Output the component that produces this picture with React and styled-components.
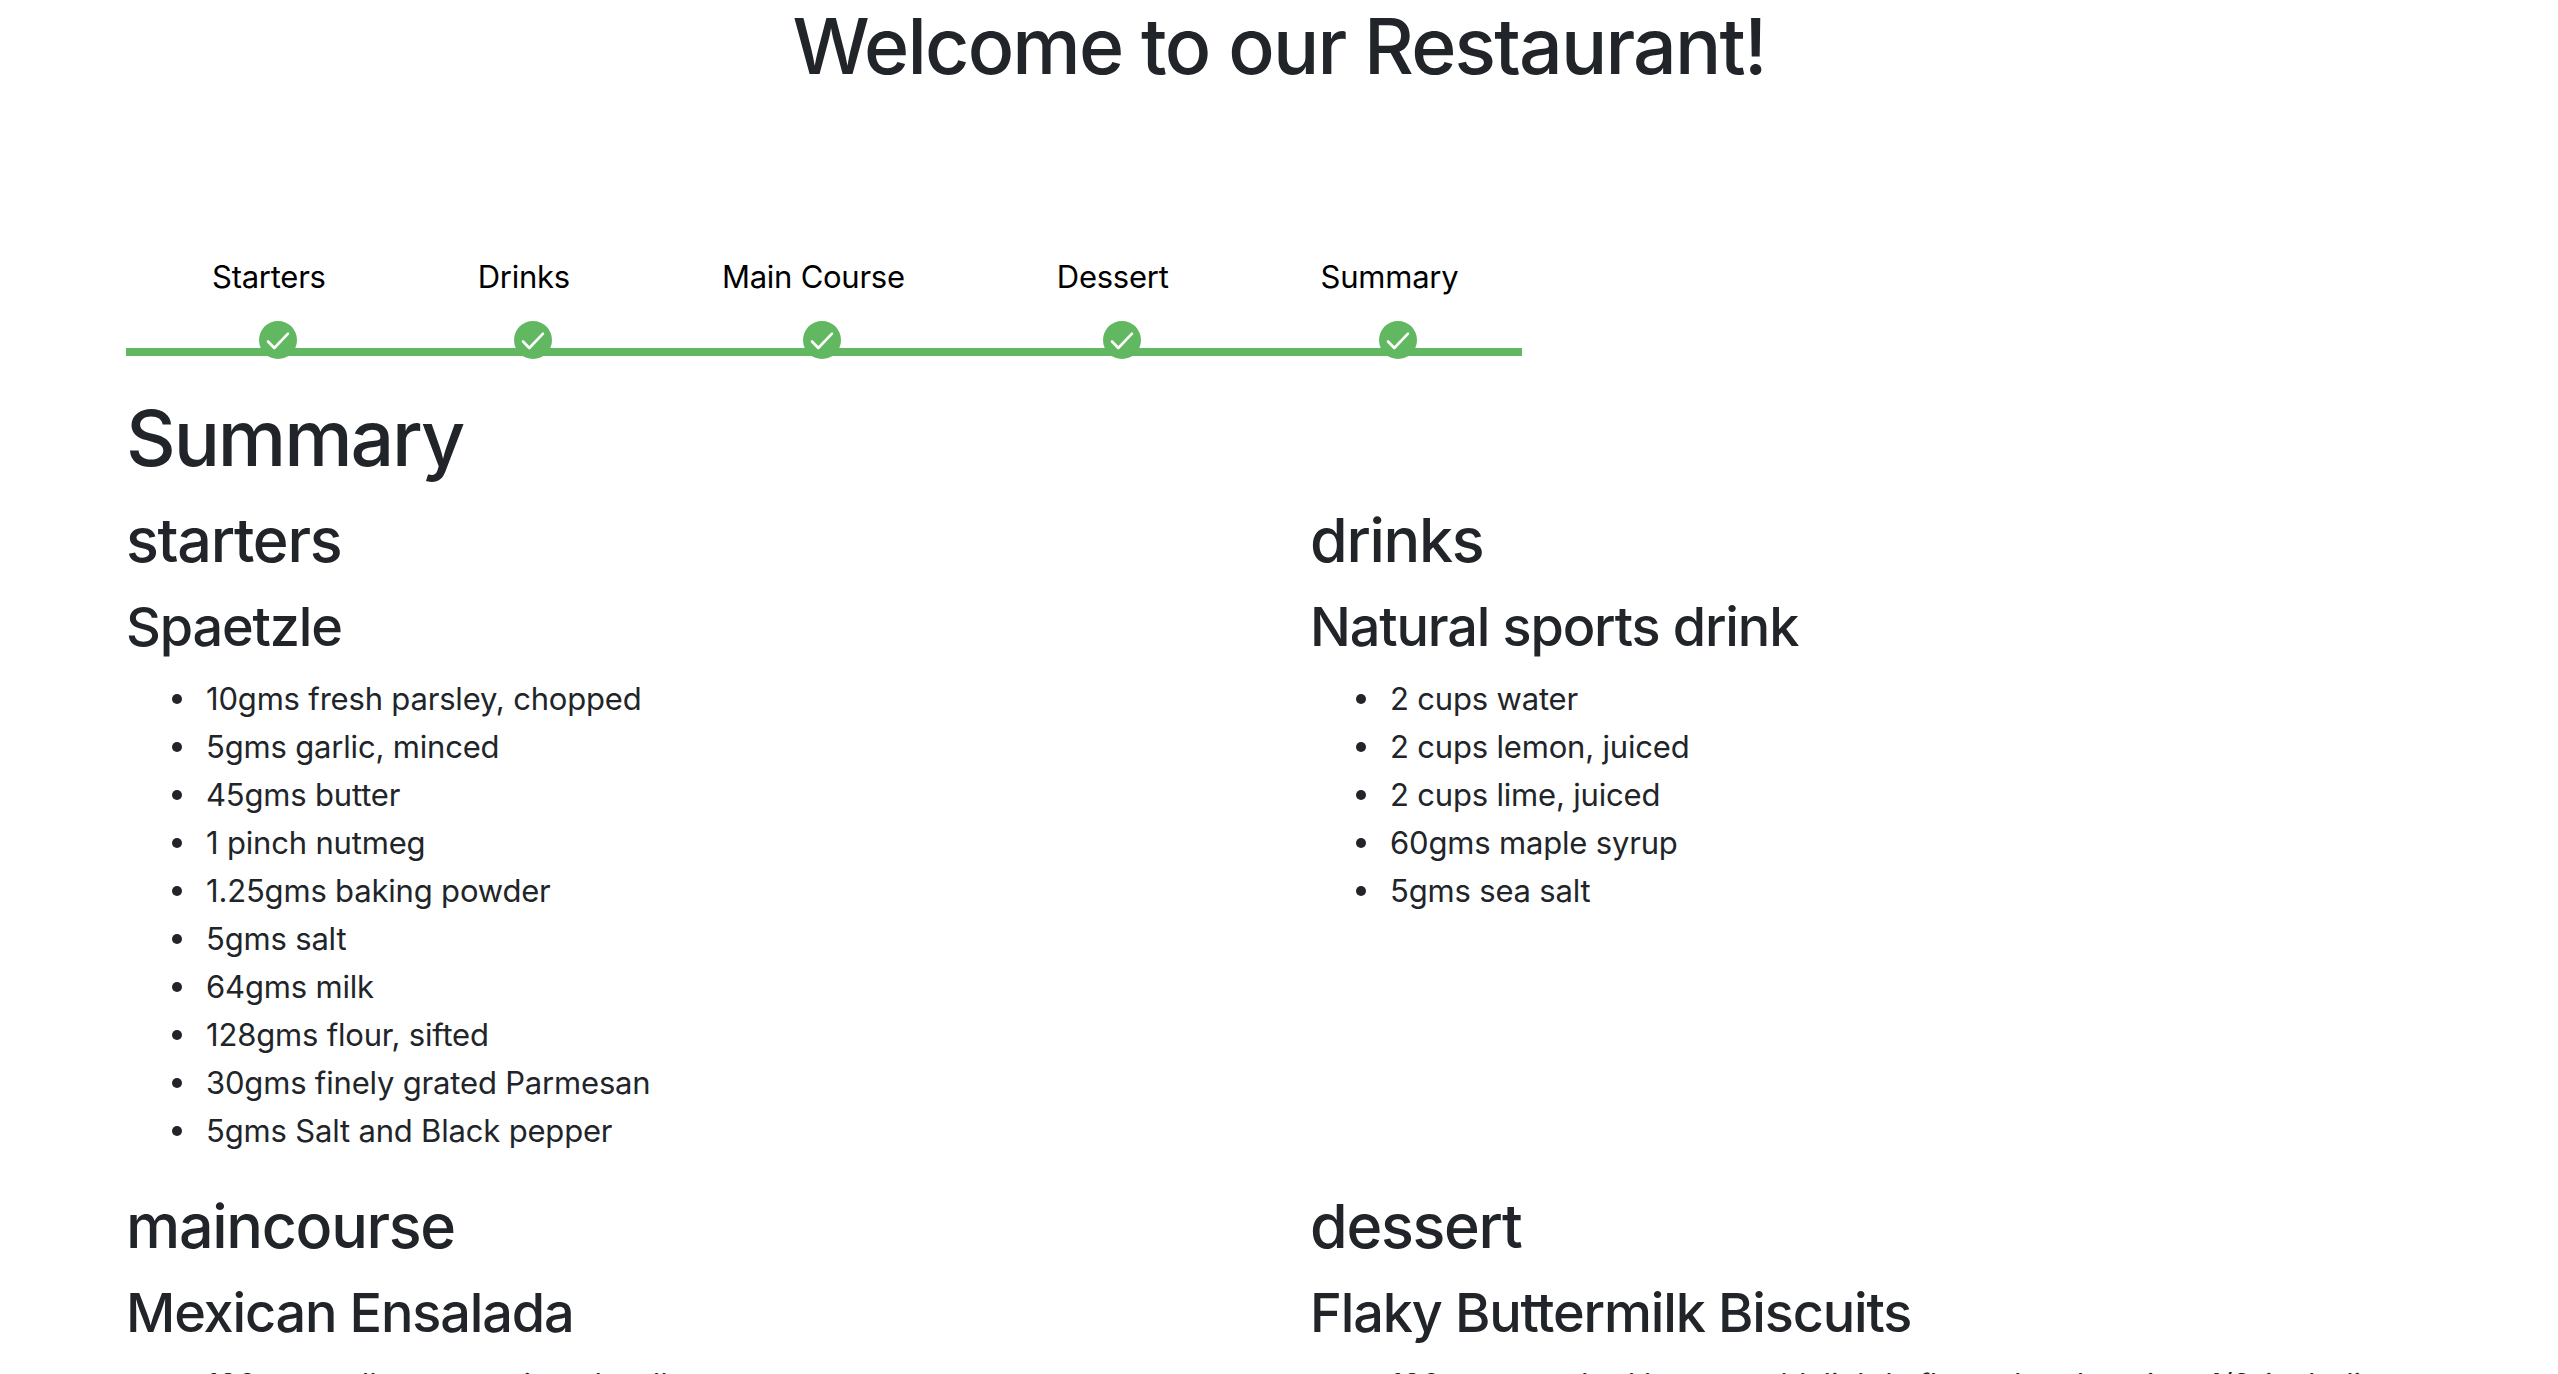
import React from "react";
import styled, { createGlobalStyle } from "styled-components";

const Global = createGlobalStyle`
  html, body { margin: 0; padding: 0; background: #fff; height: 100%; overflow: hidden; }
  body { font-family: Inter, "Liberation Sans", sans-serif; color: #212529; font-size: 32px; line-height: 48px; }
`;
const Page = styled.div`height: 1374px; overflow: hidden; padding: 0 126px; box-sizing: border-box;`;
const Title = styled.h1`margin: 0 0 157px; font-size: 77px; line-height: 93px; height: 96px; font-weight: 500; text-align: center; letter-spacing: -1.8px;`;
const Stepper = styled.div`width: 1396px; position: relative; height: 103px;`;
const Steps = styled.ol`list-style: none; margin: 0; padding: 0 0 0 86px; display: flex; gap: 152px;`;
const Step = styled.li`display: flex; flex-direction: column; align-items: center; color: #000; font-size: 31px; line-height: 48px; height: 103px; letter-spacing: -0.25px;`;
const Dot = styled.span`width: 38px; height: 38px; margin: 20px 0 0 18px; border-radius: 50%; background: #61b861; display: block; position: relative; z-index: 1;`;
const Line = styled.div`position: absolute; left: 0; right: 0; bottom: 0; height: 8px; background: #61b861;`;
const Heading = styled.h2`margin: 34px 0 16px; font-size: 77px; line-height: 96px; font-weight: 500; letter-spacing: -2.1px;`;
const Grid = styled.div`display: grid; grid-template-columns: 1184px 1184px;`;
const Col = styled.section`padding-bottom: 33px;`;
const Course = styled.h3`margin: 0 0 14px; font-size: 61px; line-height: 77px; font-weight: 500; letter-spacing: -1.3px;`;
const Dish = styled.h4`margin: 0 0 15px; font-size: 54px; line-height: 67px; font-weight: 500; letter-spacing: -1.15px;`;
const List = styled.ul`margin: 0; padding: 0 0 0 80px; list-style: none;`;
const Item = styled.li`
  position: relative;
  font-size: 31px;
  line-height: 48px;
  letter-spacing: -0.18px;
  &::before {
    content: "";
    position: absolute;
    left: -34px;
    top: 19px;
    width: 10px;
    height: 10px;
    border-radius: 50%;
    background: #212529;
  }
`;

const Check = () => (
  <svg width="38" height="38" viewBox="0 0 38 38" fill="none" stroke="#fff" strokeWidth="2.6" strokeLinecap="round" strokeLinejoin="round"><path d="M9 20.5 L15.3 27 L29 12.6" /></svg>
);

const steps = ["Starters", "Drinks", "Main Course", "Dessert", "Summary"];
const sections = [
  { course: "starters", dish: "Spaetzle", items: ["10gms fresh parsley, chopped", "5gms garlic, minced", "45gms butter", "1 pinch nutmeg", "1.25gms baking powder", "5gms salt", "64gms milk", "128gms flour, sifted", "30gms finely grated Parmesan", "5gms Salt and Black pepper"] },
  { course: "drinks", dish: "Natural sports drink", items: ["2 cups water", "2 cups lemon, juiced", "2 cups lime, juiced", "60gms maple syrup", "5gms sea salt"] },
  { course: "maincourse", dish: "Mexican Ensalada", items: ["180gms yellow corn, rinsed well"] },
  { course: "dessert", dish: "Flaky Buttermilk Biscuits", items: ["180gms unsalted butter, cold, lightly floured and cut into 1/2-inch dice"] },
];

export default function App() {
  return (
    <Page>
      <Global />
      <Title>Welcome to our Restaurant!</Title>
      <Stepper>
        <Line />
        <Steps>
          {steps.map((s) => (
            <Step key={s}>{s}<Dot><Check /></Dot></Step>
          ))}
        </Steps>
      </Stepper>
      <Heading>Summary</Heading>
      <Grid>
        {sections.map((s) => (
          <Col key={s.course}>
            <Course>{s.course}</Course>
            <Dish>{s.dish}</Dish>
            <List>{s.items.map((i) => <Item key={i}>{i}</Item>)}</List>
          </Col>
        ))}
      </Grid>
    </Page>
  );
}
